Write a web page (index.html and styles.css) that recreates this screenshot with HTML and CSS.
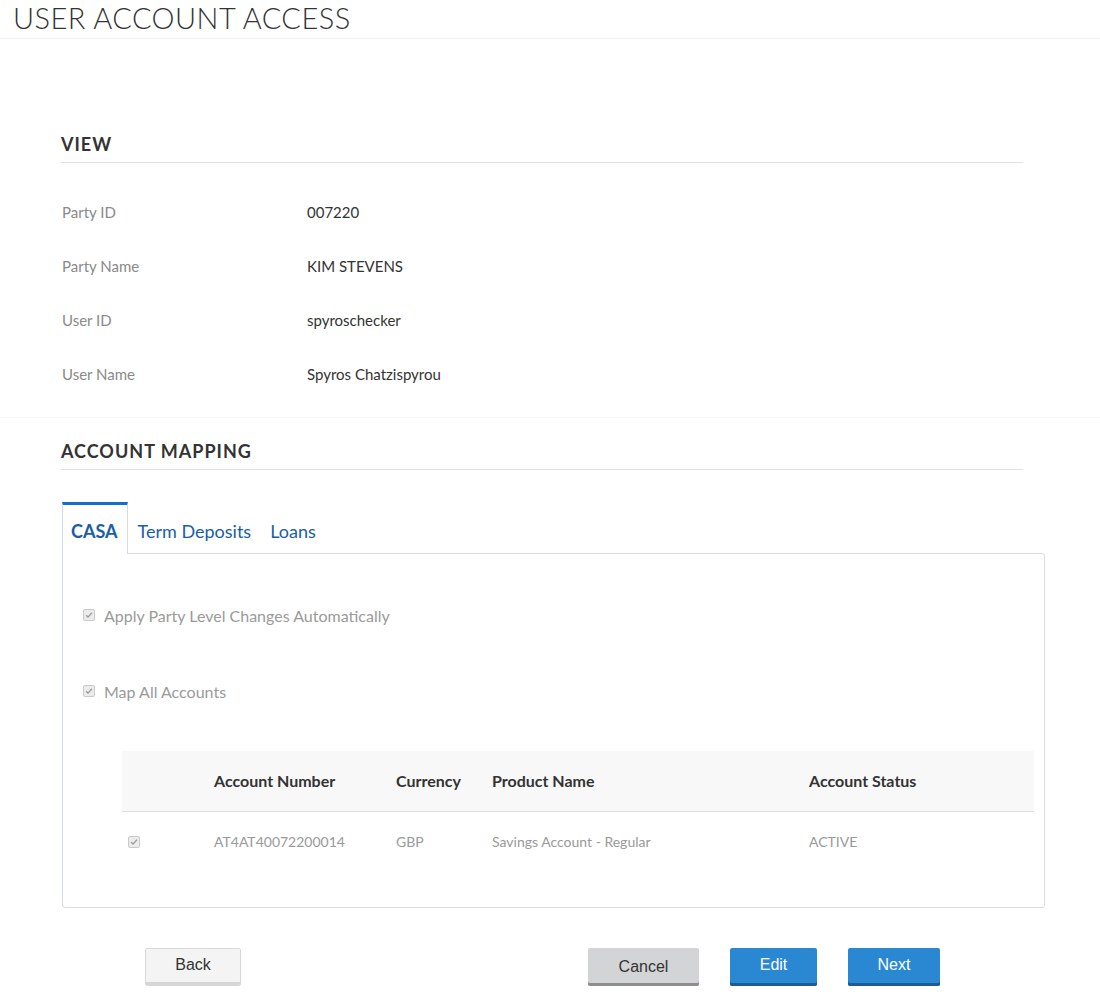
FILE: index.html
```html
<!DOCTYPE html>
<html lang="en">
<head>
<meta charset="utf-8">
<title>User Account Access</title>
<link rel="stylesheet" href="styles.css">
</head>
<body>
<header class="page-header">
  <h1 class="page-title">USER ACCOUNT ACCESS</h1>
</header>

<main class="content">
  <section class="view-section">
    <h2 class="section-title">VIEW</h2>
    <div class="info-row"><span class="info-label">Party ID</span><span class="info-value">007220</span></div>
    <div class="info-row"><span class="info-label">Party Name</span><span class="info-value">KIM STEVENS</span></div>
    <div class="info-row"><span class="info-label">User ID</span><span class="info-value">spyroschecker</span></div>
    <div class="info-row"><span class="info-label">User Name</span><span class="info-value">Spyros Chatzispyrou</span></div>
  </section>

  <section class="mapping-section">
    <h2 class="section-title">ACCOUNT MAPPING</h2>

    <nav class="tabs">
      <span class="tab tab-active">CASA</span>
      <span class="tab">Term Deposits</span>
      <span class="tab tab-last">Loans</span>
    </nav>

    <div class="panel">
      <label class="check-row check-first">
        <span class="checkbox"><svg viewBox="0 0 12 12" width="10" height="10"><path d="M2.5 6.3 L4.8 8.5 L9.5 3.3" fill="none" stroke="#9a9a9a" stroke-width="1.6"/></svg></span>
        <span class="check-label">Apply Party Level Changes Automatically</span>
      </label>
      <label class="check-row check-second">
        <span class="checkbox"><svg viewBox="0 0 12 12" width="10" height="10"><path d="M2.5 6.3 L4.8 8.5 L9.5 3.3" fill="none" stroke="#9a9a9a" stroke-width="1.6"/></svg></span>
        <span class="check-label">Map All Accounts</span>
      </label>

      <table class="accounts">
        <thead>
          <tr>
            <th class="col-check"></th>
            <th class="col-number">Account Number</th>
            <th class="col-currency">Currency</th>
            <th class="col-product">Product Name</th>
            <th class="col-status">Account Status</th>
          </tr>
        </thead>
        <tbody>
          <tr>
            <td class="col-check"><span class="checkbox"><svg viewBox="0 0 12 12" width="10" height="10"><path d="M2.5 6.3 L4.8 8.5 L9.5 3.3" fill="none" stroke="#9a9a9a" stroke-width="1.6"/></svg></span></td>
            <td>AT4AT40072200014</td>
            <td>GBP</td>
            <td>Savings Account - Regular</td>
            <td>ACTIVE</td>
          </tr>
        </tbody>
      </table>
    </div>
  </section>

  <div class="actions">
    <button class="btn btn-back">Back</button>
    <div class="actions-right">
      <button class="btn btn-cancel">Cancel</button>
      <button class="btn btn-primary btn-edit">Edit</button>
      <button class="btn btn-primary btn-next">Next</button>
    </div>
  </div>
</main>
</body>
</html>
```

FILE: styles.css
```css
* { box-sizing: border-box; }

html, body {
  margin: 0;
  padding: 0;
  background: #ffffff;
  font-family: Lato, "Open Sans", sans-serif;
  color: #333333;
}

.page-header {
  height: 39px;
  border-bottom: 1px solid #f3f3f3;
  padding-left: 13px;
}

.page-title {
  margin: 0;
  font-size: 29px;
  font-weight: 300;
  line-height: 36px;
  letter-spacing: 0.45px;
  color: #333333;
}

.content {
  padding: 0 55px 0 62px;
}

.section-title {
  margin: 0;
  width: 962px;
  font-size: 18px;
  font-weight: 700;
  letter-spacing: 1px;
  line-height: 24px;
  padding-bottom: 6px;
  border-bottom: 1px solid #e2e2e2;
  color: #333333;
  margin-left: -1px;
}

.view-section {
  padding-top: 93px;
  padding-bottom: 16px;
  border-bottom: 1px solid #f7f7f7;
  margin: 0 -55px 0 -62px;
  padding-left: 62px;
}

.info-row {
  display: flex;
  align-items: center;
  height: 54px;
  font-size: 15px;
}

.info-row:first-of-type { margin-top: 22px; }

.info-label {
  width: 245px;
  color: #8a8a8a;
}

.info-value {
  color: #333333;
}

.mapping-section {
  padding-top: 21px;
}

.tabs {
  display: flex;
  margin-top: 32px;
  height: 51px;
  position: relative;
  z-index: 1;
}

.tab {
  display: flex;
  align-items: center;
  padding: 3px 9px 0 9px;
  border: 1px solid transparent;
  border-top: 3px solid transparent;
  border-bottom: none;
  font-size: 18px;
  color: #1a5ea6;
  height: 51px;
}

.tab-last { padding-left: 8px; }

.tab-active {
  border-color: #d3dbe3;
  border-top-color: #1170cf;
  background: #ffffff;
  font-weight: 700;
  height: 52px;
  padding: 3px 9px 0 8px;
}

.panel {
  border: 1px solid #d6dde4;
  border-radius: 0 3px 3px 3px;
  padding: 0 10px 36px 20px;
}

.check-row {
  display: flex;
  align-items: center;
  font-size: 16px;
  color: #9a9a9a;
  height: 24px;
}

.check-first { margin-top: 49px; }
.check-second { margin-top: 52px; }

.checkbox {
  display: inline-flex;
  align-items: center;
  justify-content: center;
  width: 12px;
  height: 12px;
  border: 1px solid #c9c9c9;
  border-radius: 2px;
  background: #ececec;
  margin-right: 9px;
}

.accounts {
  margin-top: 48px;
  margin-left: 39px;
  width: 912px;
  border-collapse: collapse;
  table-layout: fixed;
}

.accounts th {
  height: 60px;
  background: #f8f8f8;
  border-bottom: 1px solid #dddddd;
  text-align: left;
  font-size: 16px;
  font-weight: 700;
  color: #333333;
  padding: 0;
}

.accounts td {
  height: 60px;
  font-size: 14px;
  color: #999999;
  padding: 0;
}

.col-check { width: 92px; padding-left: 6px !important; }
.col-number { width: 182px; }
.col-currency { width: 96px; }
.col-product { width: 317px; }
.col-status { width: 225px; }

.accounts td.col-check .checkbox { margin-right: 0; }

.actions {
  display: flex;
  align-items: flex-start;
  margin-top: 40px;
  padding-left: 83px;
}

.actions-right {
  display: flex;
  margin-left: 347px;
  gap: 31px;
}

.btn {
  height: 38px;
  border: none;
  border-radius: 2px;
  font-family: "Liberation Sans", Arial, sans-serif;
  font-size: 16px;
  cursor: pointer;
  padding: 0;
  display: flex;
  align-items: center;
  justify-content: center;
}

.btn-back {
  width: 96px;
  background: #f4f4f4;
  color: #333333;
  border: 1px solid #d8d8d8;
  box-shadow: inset 0 -3px 0 #d6d6d6;
  padding-bottom: 4px;
}

.btn-cancel {
  width: 111px;
  background: #d3d4d6;
  color: #333333;
  box-shadow: inset 0 -3px 0 #8e8e8e;
  padding-bottom: 1px;
}

.btn-primary {
  background: #2a88d3;
  color: #ffffff;
  box-shadow: inset 0 -3px 0 #1e5c8f;
  padding-bottom: 4px;
}

.btn-edit { width: 87px; }
.btn-next { width: 92px; }
```
